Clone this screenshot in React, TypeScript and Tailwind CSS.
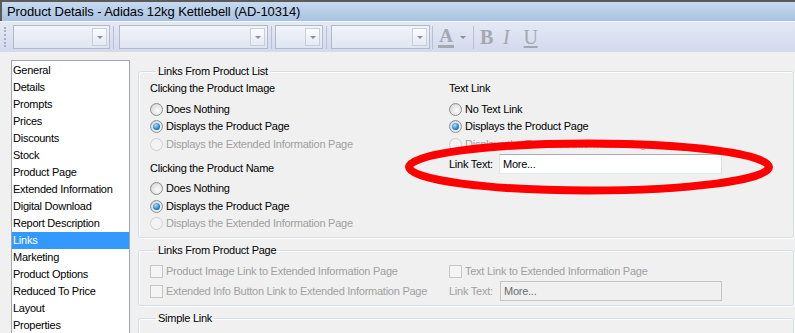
import clsx from 'clsx';

const ui = "font-['Liberation_Sans',Arial,sans-serif] text-[11px] tracking-[-0.25px]";

const sections = [
  'General',
  'Details',
  'Prompts',
  'Prices',
  'Discounts',
  'Stock',
  'Product Page',
  'Extended Information',
  'Digital Download',
  'Report Description',
  'Links',
  'Marketing',
  'Product Options',
  'Reduced To Price',
  'Layout',
  'Properties',
];

function Combo({ width }: { width: string }) {
  return (
    <div
      className={clsx(
        'flex h-[24px] border border-[#b3b9c6] bg-gradient-to-b from-[#f2f4fa] to-[#dfe5f2]',
        width
      )}
    >
      <div className="flex-1" />
      <div className="my-[2px] mr-[2px] flex w-[15px] items-center justify-center border border-[#c9ced9] bg-gradient-to-b from-[#fbfcfe] to-[#e6eaf4]">
        <span className="h-0 w-0 border-x-[3.5px] border-t-[3.5px] border-x-transparent border-t-[#8a8e96]" />
      </div>
    </div>
  );
}

function Radio({ label, checked, disabled }: { label: string; checked?: boolean; disabled?: boolean }) {
  return (
    <div className="flex h-[17.5px] items-center">
      <span
        className={clsx(
          'flex h-[13px] w-[13px] items-center justify-center rounded-full border',
          disabled
            ? 'border-[#cfcfcf] bg-[#f3f3f3]'
            : 'border-[#8e8f8f] bg-[radial-gradient(circle_at_60%_60%,#fbfbfb,#e4e4e4_55%,#c5c5c5)]'
        )}
      >
        {checked && (
          <span className="h-[7px] w-[7px] rounded-full bg-[radial-gradient(circle_at_40%_35%,#a8e6ff,#2a8ad4_55%,#0b3f7a)]" />
        )}
      </span>
      <span className={clsx('ml-[3px] leading-[13px]', disabled ? 'text-[#a0a0a0]' : 'text-black')}>{label}</span>
    </div>
  );
}

function Check({ label }: { label: string }) {
  return (
    <div className="flex h-[20px] items-center">
      <span className="h-[13px] w-[13px] border border-[#c6c6c6] bg-[#f4f4f4]" />
      <span className="ml-[3px] leading-[13px] text-[#a0a0a0]">{label}</span>
    </div>
  );
}

function Group({ title, className, children }: { title: string; className?: string; children?: React.ReactNode }) {
  return (
    <fieldset
      className={clsx(
        'rounded-[3px] border border-[#d5dfe5] pl-[11px] shadow-[inset_1px_1px_0_#ffffff,1px_1px_0_#ffffff]',
        className
      )}
    >
      <legend className="ml-[6px] px-[2px] leading-[14px] text-black">{title}</legend>
      {children}
    </fieldset>
  );
}

export default function App() {
  return (
    <div className={clsx('relative h-[333px] w-[795px] overflow-hidden bg-[#f0f0f0]', ui)}>
      {/* title bar */}
      <div className="flex h-[21px] items-center border-l-2 border-t-2 border-[#5b5b5b] bg-gradient-to-b from-[#c8daef] to-[#a8c2e1] pl-[5px]">
        <span className="font-['Liberation_Sans',Arial,sans-serif] text-[13px] tracking-[-0.1px] text-black">
          Product Details - Adidas 12kg Kettlebell (AD-10314)
        </span>
      </div>
      <div className="h-[1px] bg-[#f4f7fb]" />

      {/* toolbar */}
      <div className="flex h-[30px] items-center bg-gradient-to-b from-[#e4e9f5] to-[#d3daed] pl-[4px]">
        <div className="flex h-[23px] w-[3px] flex-col justify-between py-[1px]">
          {Array.from({ length: 6 }).map((_, i) => (
            <span key={i} className="h-[2px] w-[2px] bg-[#a9b0bf]" />
          ))}
        </div>
        <div className="ml-[6px] flex items-center">
          <Combo width="w-[97px]" />
          <span className="ml-[3px] h-[23px] w-[1px] bg-[#b9c0cf]" />
          <Combo width="ml-[5px] w-[149px]" />
          <span className="ml-[3px] h-[23px] w-[1px] bg-[#b9c0cf]" />
          <Combo width="ml-[3px] w-[48px]" />
          <span className="ml-[3px] h-[23px] w-[1px] bg-[#b9c0cf]" />
          <Combo width="ml-[4px] w-[99px]" />
          <span className="ml-[2px] h-[23px] w-[1px] bg-[#b9c0cf]" />
          <div className="ml-[5px] flex items-center">
            <span className="flex flex-col items-center">
              <span className="font-['Liberation_Serif',serif] text-[19px] font-bold leading-[17px] text-[#a4a8b0]">A</span>
              <span className="mt-[1px] h-[3px] w-[16px] bg-[#a4a8b0]" />
            </span>
            <span className="ml-[6px] h-0 w-0 border-x-[3px] border-t-[3px] border-x-transparent border-t-[#8a8e96]" />
          </div>
          <span className="ml-[7px] h-[23px] w-[1px] bg-[#b9c0cf]" />
          <span className="ml-[6px] font-['Liberation_Serif',serif] text-[20px] font-bold text-[#a4a8b0]">B</span>
          <span className="ml-[10px] font-['Liberation_Serif',serif] text-[20px] italic text-[#a4a8b0]">I</span>
          <span className="ml-[14px] font-['Liberation_Serif',serif] text-[20px] text-[#a4a8b0] underline decoration-2 underline-offset-2">
            U
          </span>
        </div>
      </div>

      {/* body */}
      <div className="flex items-start">
        <div className="ml-[11px] mt-[8px] h-[300px] w-[119px] border border-[#a2a6ae] bg-white pt-[1px]">
          {sections.map((s) => (
            <div
              key={s}
              className={clsx(
                'flex h-[17px] items-center pl-[1px]',
                s === 'Links' ? 'bg-[#3399ff] text-white' : 'text-black'
              )}
            >
              {s}
            </div>
          ))}
        </div>

        <div className="ml-[8px] mr-[1px] mt-[12px] flex-1">
          <Group title="Links From Product List" className="pb-[4.5px] pt-[2px]">
            <div className="flex">
              <div className="w-[299px]">
                <div className="flex h-[17px] items-center">Clicking the Product Image</div>
                <div className="mt-[3.5px]">
                  <Radio label="Does Nothing" />
                  <Radio label="Displays the Product Page" checked />
                  <Radio label="Displays the Extended Information Page" disabled />
                </div>
                <div className="mt-[6.5px] flex h-[17px] items-center">Clicking the Product Name</div>
                <div className="mt-[3.5px]">
                  <Radio label="Does Nothing" />
                  <Radio label="Displays the Product Page" checked />
                  <Radio label="Displays the Extended Information Page" disabled />
                </div>
              </div>
              <div>
                <div className="flex h-[17px] items-center">Text Link</div>
                <div className="mt-[3.5px]">
                  <Radio label="No Text Link" />
                  <Radio label="Displays the Product Page" checked />
                  <Radio label="Displays the Extended Information Page" disabled />
                </div>
                <div className="mt-[1px] flex items-center">
                  <span className="w-[50px]">Link Text:</span>
                  <div className="flex h-[20px] w-[223px] items-center border border-[#abadb3] border-b-[#e3e9ef] border-l-[#e2e3ea] border-r-[#dbdfe6] bg-white pl-[3px]">
                    More...
                  </div>
                </div>
              </div>
            </div>
          </Group>

          <Group title="Links From Product Page" className="mt-[5px] pb-[4px] pt-[4px]">
            <div className="flex">
              <div className="w-[299px]">
                <Check label="Product Image Link to Extended Information Page" />
                <Check label="Extended Info Button Link to Extended Information Page" />
              </div>
              <div>
                <Check label="Text Link to Extended Information Page" />
                <div className="flex h-[20px] items-center">
                  <span className="w-[51px] text-[#a0a0a0]">Link Text:</span>
                  <div className="flex h-[20px] w-[222px] items-center border border-[#c4c4c4] bg-[#f0f0f0] pl-[3px] text-[#6d6d6d]">
                    More...
                  </div>
                </div>
              </div>
            </div>
          </Group>

          <Group title="Simple Link" className="mt-[5px] h-[60px]" />
        </div>
      </div>

      {/* red marker ellipse drawn over the screenshot */}
      <svg className="pointer-events-none absolute left-0 top-0" width="795" height="333">
        <ellipse cx="589" cy="167" rx="180" ry="23.5" fill="none" stroke="#ff0000" strokeWidth="8" />
      </svg>
    </div>
  );
}
